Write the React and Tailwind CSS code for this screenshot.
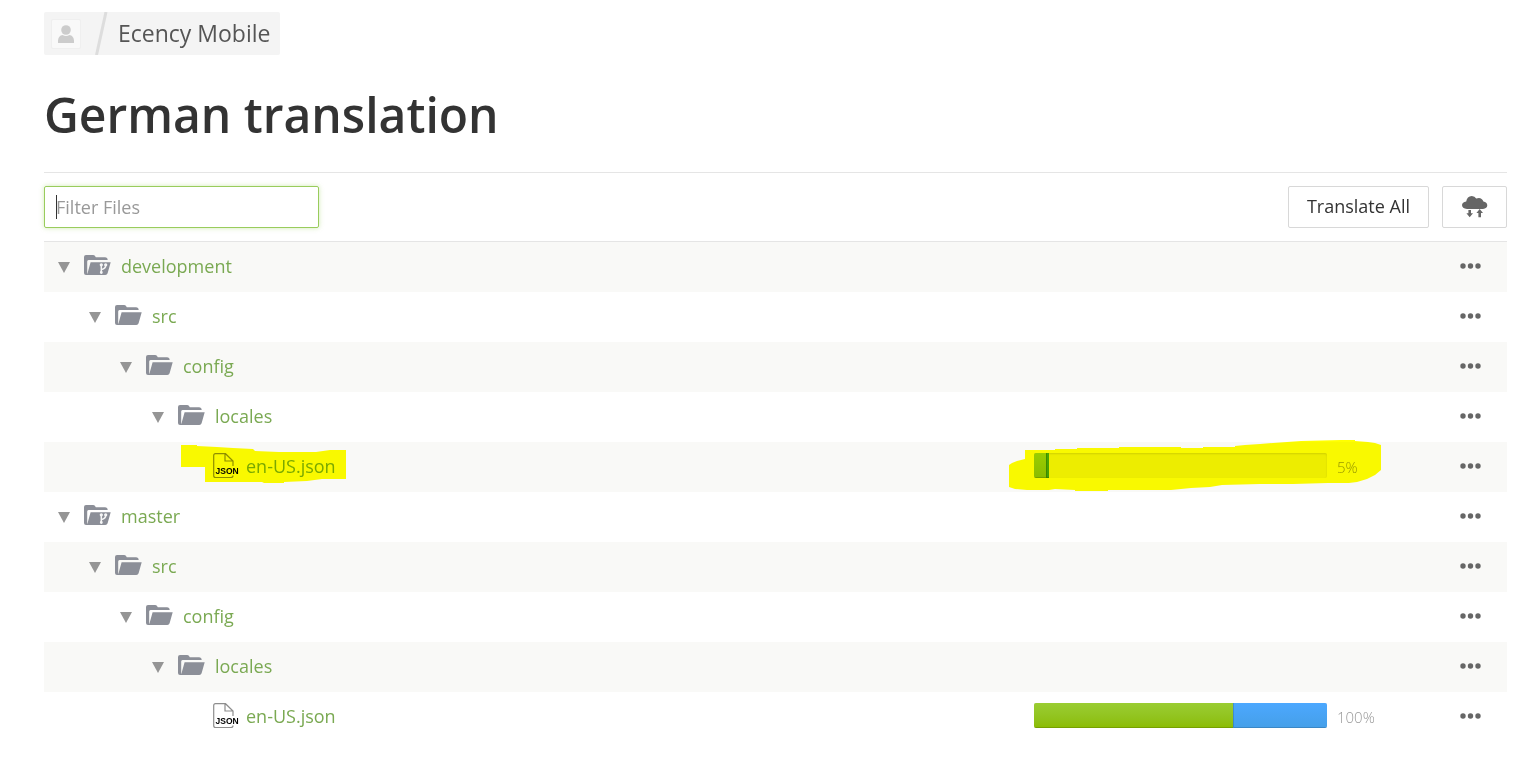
import { useState } from 'react';

const files = [
  { id: 1, name: 'development', type: 'branch', depth: 0 },
  { id: 2, name: 'src', type: 'folder', depth: 1 },
  { id: 3, name: 'config', type: 'folder', depth: 2 },
  { id: 4, name: 'locales', type: 'folder', depth: 3 },
  { id: 5, name: 'en-US.json', type: 'json', depth: 4, approved: 4, translated: 1, total: '5%', marked: true },
  { id: 6, name: 'master', type: 'branch', depth: 0 },
  { id: 7, name: 'src', type: 'folder', depth: 1 },
  { id: 8, name: 'config', type: 'folder', depth: 2 },
  { id: 9, name: 'locales', type: 'folder', depth: 3 },
  { id: 10, name: 'en-US.json', type: 'json', depth: 4, approved: 68, translated: 32, total: '100%' },
];

const indents = ['pl-[14px]', 'pl-[45px]', 'pl-[76px]', 'pl-[108px]', 'pl-[164px]'];

function FolderIcon({ branch }) {
  return (
    <svg width="27" height="20" viewBox="0 0 27 20" className="shrink-0" aria-hidden="true">
      <path d="M0 18V2Q0 0 2 0H9Q10.500 0 11.200 1.200L11.800 2.300H21Q23.500 2.300 23.700 5H4.500Q3.200 5 3.200 6.500V20H2Q0 20 0 18Z" fill="#8c8f98" />
      <path d="M6.600 7.200H26.700L23.600 18.300Q23 20 21.300 20H2.500L3.600 18Z" fill="#8c8f98" />
      {branch && (
        <g fill="none" stroke="#f6f6f6" strokeWidth="1.500">
          <path d="M17.300 10.500V17.500M21.700 10.500Q21.700 13.500 17.600 14.600" />
          <circle cx="17.300" cy="9.800" r="0.900" fill="#f6f6f6" />
          <circle cx="21.700" cy="9.800" r="0.900" fill="#f6f6f6" />
          <circle cx="17.300" cy="17.500" r="0.700" fill="#f6f6f6" />
        </g>
      )}
    </svg>
  );
}

function JsonIcon() {
  return (
    <svg width="27" height="26" viewBox="0 0 27 26" className="shrink-0" aria-hidden="true">
      <path d="M20 13V8L12.500 0.700H2.500Q0.700 0.700 0.700 2.500V22.500Q0.700 24.500 2.500 24.500H18Q20 24.500 20 22.500M12 1V8H20" fill="none" stroke="#8e8e8e" strokeWidth="1.200" />
      <text x="2.500" y="21" fontSize="8.500" fontWeight="bold" fontFamily="Liberation Sans, sans-serif" fill="#000">JSON</text>
    </svg>
  );
}

function CloudSyncIcon() {
  return (
    <svg width="26" height="22" viewBox="0 0 26 22" fill="#666" aria-hidden="true">
      <path d="M5 13Q0 12.500 0 9Q0.200 6 4.200 5.400Q5 0.300 9.800 0Q12.800 0 14.200 2.500Q19.500 0.500 21.400 5.600Q25 6.200 25.300 9.300Q25.200 12.600 21 13Z" />
      <path d="M6.400 14H9V17.300H11L7.700 21.300L4.400 17.300H6.400Z" />
      <path d="M16.400 21.300H19V17H21L17.700 13L14.400 17H16.400Z" />
    </svg>
  );
}

// Marker strokes drawn over the row
function NameMarker() {
  return (
    <svg width="165" height="50" viewBox="0 0 165 50" className="pointer-events-none absolute top-0 -left-[27px] mix-blend-multiply" aria-hidden="true">
      <path d="M0 3H16V4L36 5L52 6L72 7L74 9L98 10L135 10L149 8H165V37H141L126 39L103 40V41H83L81 40H24V25H0Z" fill="#ff0" />
    </svg>
  );
}

function ProgressMarker() {
  return (
    <svg width="372" height="52" viewBox="0 0 372 52" className="pointer-events-none absolute -top-0.5 -left-[25px] mix-blend-multiply" aria-hidden="true">
      <path d="M0 25L3 23L8 21L16 19V10H46V9H68V8H110V7H172V8H194V7H226V6L236 5L251 4L264 3L292 1L332 0H346V1L359 2L366 3L372 5V30L366 35L358 39L348 42L340 43L319 43L284 44L251 44L213 45L201 47L182 48L162 50H99V51H66V50L46 49L40 50H18L6 49L0 47Z" fill="#ff0" />
    </svg>
  );
}

function ProgressBar({ file }) {
  return (
    <div className="relative flex h-[50px] items-center gap-2.5">
      <div
        role="progressbar"
        aria-label={`${file.name} progress`}
        aria-valuenow={file.approved + file.translated}
        className="mb-[3px] flex h-[25px] w-[293px] overflow-hidden rounded-xs bg-[#ededeb] shadow-[inset_0_1px_2px_rgba(0,0,0,0.12)]"
      >
        <div className="bg-linear-to-b from-[#9acd32] to-[#8bbc00] shadow-[inset_0_-1px_0_rgba(0,0,0,0.15)]" style={{ width: `${file.approved}%` }} />
        <div className="bg-linear-to-b from-[#4ca8ff] to-[#459fe8] shadow-[inset_1px_-1px_0_rgba(0,0,0,0.15)]" style={{ width: `${file.translated}%` }} />
      </div>
      <span className="text-[15px] font-light text-[#999]">{file.total}</span>
      {file.marked && <ProgressMarker />}
    </div>
  );
}

function FileRow({ file }) {
  const isFile = file.type === 'json';

  return (
    <tr className="h-[50px] odd:bg-[#f9f9f7]">
      <td className={`p-0 ${indents[file.depth]}`}>
        <div className="relative flex h-[50px] items-center pb-0.5">
          {!isFile && (
            <button type="button" aria-label={`Toggle ${file.name}`} className="mr-3.5 shrink-0">
              <svg width="12" height="11" viewBox="0 0 12 11" className="mt-0.5 block" aria-hidden="true">
                <path d="M0 0H12L6 11Z" fill="#959595" />
              </svg>
            </button>
          )}
          <a href="#" className={`flex items-center text-lg text-[#7aa952] ${isFile ? 'ml-[5px] gap-1.5' : 'gap-2.5'}`}>
            <span className={isFile ? '' : 'mb-0.5'}>
              {isFile ? <JsonIcon /> : <FolderIcon branch={file.type === 'branch'} />}
            </span>
            <span>{file.name}</span>
          </a>
          {file.marked && <NameMarker />}
        </div>
      </td>
      <td className="w-[403px] p-0">{isFile && <ProgressBar file={file} />}</td>
      <td className="w-[70px] p-0 pr-[26px] text-right">
        <button type="button" aria-label={`Actions for ${file.name}`} className="align-middle">
          <svg width="21" height="6" viewBox="0 0 21 6" fill="#666" className="mb-1.5 block" aria-hidden="true">
            <circle cx="3" cy="3" r="2.700" />
            <circle cx="10.500" cy="3" r="2.700" />
            <circle cx="18" cy="3" r="2.700" />
          </svg>
        </button>
      </td>
    </tr>
  );
}

export default function App() {
  const [filter, setFilter] = useState('');
  const visible = files.filter((file) => file.name.toLowerCase().includes(filter.toLowerCase()));

  return (
    <div className="bg-white pt-3 pr-6 pl-11 font-['Open_Sans',sans-serif] text-[#333]">
      {/* Breadcrumb */}
      <nav className="flex">
        <div className="flex h-[43px] items-center rounded-xs bg-[#f4f4f4] pr-2.5 pl-[7px]">
          <a href="#" aria-label="Owner" className="flex h-[30px] w-[30px] items-center justify-center rounded-xs border border-[#efefef] bg-[#f9f9f9]">
            <svg width="16" height="18" viewBox="0 0 16 18" fill="#ccc" aria-hidden="true">
              <circle cx="8" cy="5" r="4.800" />
              <path d="M0 18V15.500Q0.500 10.500 4.500 10Q8 12 11.500 10Q15.500 10.500 16 15.500V18Z" />
            </svg>
          </a>
          <svg width="13" height="43" viewBox="0 0 13 43" className="mr-2.5 ml-3.5" aria-hidden="true">
            <path d="M1.500 43L11 0" stroke="#ddd" strokeWidth="3" />
          </svg>
          <a href="#" className="pb-0.5 text-[23px] leading-8 text-[#555]">Ecency Mobile</a>
        </div>
      </nav>

      <h1 className="pt-6 pb-[21px] text-5xl leading-[72px] font-semibold">German translation</h1>

      {/* Toolbar */}
      <div className="flex items-center justify-between border-y border-[#e5e5e5] py-[13px]">
        <div className="relative">
          <input
            type="text"
            aria-label="Filter Files"
            placeholder="Filter Files"
            value={filter}
            onChange={(e) => setFilter(e.target.value)}
            className="block h-[42px] w-[275px] rounded-xs border border-[#99cc5c] px-[11px] text-lg caret-transparent shadow-[0_0_5px_rgba(140,200,70,0.4)] outline-none placeholder:text-[#999]"
          />
          <span className="pointer-events-none absolute top-[9px] left-3 h-6 w-px bg-[#333]" />
        </div>
        <div className="flex gap-[13px]">
          <button type="button" className="h-[42px] rounded-xs border border-[#d8d8d8] px-[18px] pb-0.5 text-lg text-[#333]">
            Translate All
          </button>
          <button type="button" aria-label="Sync files" className="flex h-[42px] w-[65px] items-center justify-center rounded-xs border border-[#d8d8d8]">
            <CloudSyncIcon />
          </button>
        </div>
      </div>

      {/* File tree */}
      <table className="w-full border-collapse">
        <tbody>
          {visible.map((file) => (
            <FileRow key={file.id} file={file} />
          ))}
        </tbody>
      </table>
    </div>
  );
}
